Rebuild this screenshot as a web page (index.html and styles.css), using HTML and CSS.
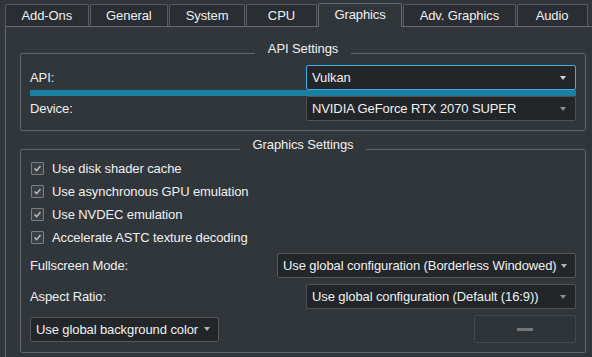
FILE: index.html
```html
<!DOCTYPE html>
<html>
<head>
  <title>Configure - Graphics</title>
  <link rel="stylesheet" href="styles.css">
</head>
<body>
  <div class="tabbar">
    <div class="tab">Add-Ons</div>
    <div class="tab">General</div>
    <div class="tab">System</div>
    <div class="tab">CPU</div>
    <div class="tab tab-active">Graphics</div>
    <div class="tab">Adv. Graphics</div>
    <div class="tab">Audio</div>
  </div>

  <div class="pane">
    <!-- API -->
    <fieldset class="group group-api">
      <legend>API Settings</legend>
      <div class="row">
        <span class="label">API:</span>
        <div class="combo combo-focus"><span class="combo-text">Vulkan</span></div>
      </div>
      <div class="highlight"></div>
      <div class="row">
        <span class="label">Device:</span>
        <div class="combo"><span class="combo-text">NVIDIA GeForce RTX 2070 SUPER</span></div>
      </div>
    </fieldset>

    <!-- Graphics -->
    <fieldset class="group group-graphics">
      <legend>Graphics Settings</legend>
      <label class="check"><span class="box"><svg viewBox="0 0 13 13"><path d="M3 6.5 L5.5 9 L10 3.5"/></svg></span>Use disk shader cache</label>
      <label class="check"><span class="box"><svg viewBox="0 0 13 13"><path d="M3 6.5 L5.5 9 L10 3.5"/></svg></span>Use asynchronous GPU emulation</label>
      <label class="check"><span class="box"><svg viewBox="0 0 13 13"><path d="M3 6.5 L5.5 9 L10 3.5"/></svg></span>Use NVDEC emulation</label>
      <label class="check"><span class="box"><svg viewBox="0 0 13 13"><path d="M3 6.5 L5.5 9 L10 3.5"/></svg></span>Accelerate ASTC texture decoding</label>

      <div class="form">
        <div class="row">
          <span class="label">Fullscreen Mode:</span>
          <div class="combo combo-wide"><span class="combo-text">Use global configuration (Borderless Windowed)</span></div>
        </div>
        <div class="row">
          <span class="label">Aspect Ratio:</span>
          <div class="combo"><span class="combo-text">Use global configuration (Default (16:9))</span></div>
        </div>
        <div class="row row-bottom">
          <div class="combo combo-bg"><span class="combo-text">Use global background color</span></div>
          <button class="color-btn" disabled><span class="dash"></span></button>
        </div>
      </div>
    </fieldset>
  </div>
</body>
</html>
```

FILE: styles.css
```css
/* Общие стили */
body {
  margin: 0;
  width: 592px;
  height: 357px;
  overflow: hidden;
  background: #31363b;
  color: #eff0f1;
  font-family: 'Liberation Sans', Arial, sans-serif;
  font-size: 13px;
  letter-spacing: -0.1px;
}

/* Вкладки */
.tabbar {
  display: flex;
  align-items: flex-end;
  gap: 1px;
  height: 23px;
  padding: 3px 0 0 5px;
}
.tab {
  box-sizing: border-box;
  flex-shrink: 0;
  height: 22px;
  min-width: 71px;
  padding: 0 15.5px;
  line-height: 21px;
  text-align: center;
  white-space: nowrap;
  background: #2a2e32;
  border: 1px solid #575b5f;
  border-bottom: none;
  border-radius: 2px 2px 0 0;
}
.tab-active {
  position: relative;
  z-index: 1;
  height: 24px;
  margin-bottom: -1px;
  line-height: 22px;
  background: #31363b;
  border-color: #666a6e;
}

/* Панель */
.pane {
  margin-left: 5px;
  border: 1px solid #666a6e;
  border-right: none;
  border-bottom: none;
  padding: 18px 6px 10px 14px;
}

.group {
  margin: 0;
  min-width: 0;
  border: 1px solid #62666a;
  border-radius: 2px;
  padding: 4px 9px 9px 9px;
}
.group legend {
  margin: 0 auto;
  padding: 0 13px 8px;
  line-height: 8px;
}
.group-graphics {
  margin-top: 10px;
  padding-top: 0;
}

.row {
  display: flex;
  align-items: center;
  justify-content: space-between;
  height: 25px;
}

.highlight {
  height: 6px;
  background: #1b7f9f;
}

/* Выпадающие списки */
.combo {
  box-sizing: border-box;
  display: flex;
  align-items: center;
  width: 270px;
  height: 25px;
  padding: 0 9px 0 5px;
  background: #232629;
  border: 1px solid #4e5256;
  border-radius: 2px;
  white-space: nowrap;
}
.combo::after {
  content: "";
  margin-left: auto;
  border-left: 3.5px solid transparent;
  border-right: 3.5px solid transparent;
  border-top: 4px solid #8d9093;
}
.combo-text {
  padding-right: 4px;
}
.combo-focus {
  border-color: #3daee9;
}
.combo-focus::after {
  border-top-color: #d5d6d7;
}
.combo-wide {
  width: 299px;
  border-color: #55595d;
}
.combo-wide::after,
.combo-bg::after {
  border-top-color: #b4b6b8;
}
.combo-bg {
  width: 189px;
  padding-right: 8px;
  border-color: #55595d;
}

/* Флажки */
.check {
  display: flex;
  align-items: center;
  gap: 8px;
  height: 23px;
}
.box {
  box-sizing: border-box;
  width: 13px;
  height: 13px;
  margin-left: 1px;
  background: #3b4045;
  border: 1px solid #7d8083;
  border-radius: 1px;
}
.box svg {
  display: block;
  width: 11px;
  height: 11px;
}
.box path {
  fill: none;
  stroke: #b9bbbd;
  stroke-width: 1.8;
}

.form {
  display: flex;
  flex-direction: column;
  gap: 6px;
  margin-top: 4px;
}
.row-bottom {
  height: 28px;
}

.color-btn {
  box-sizing: border-box;
  display: flex;
  align-items: center;
  justify-content: center;
  width: 102px;
  height: 28px;
  padding: 0;
  background: #2f3438;
  border: 1px solid #45494d;
  border-radius: 2px;
}
.dash {
  width: 16px;
  height: 3px;
  background: #74777a;
}
```
